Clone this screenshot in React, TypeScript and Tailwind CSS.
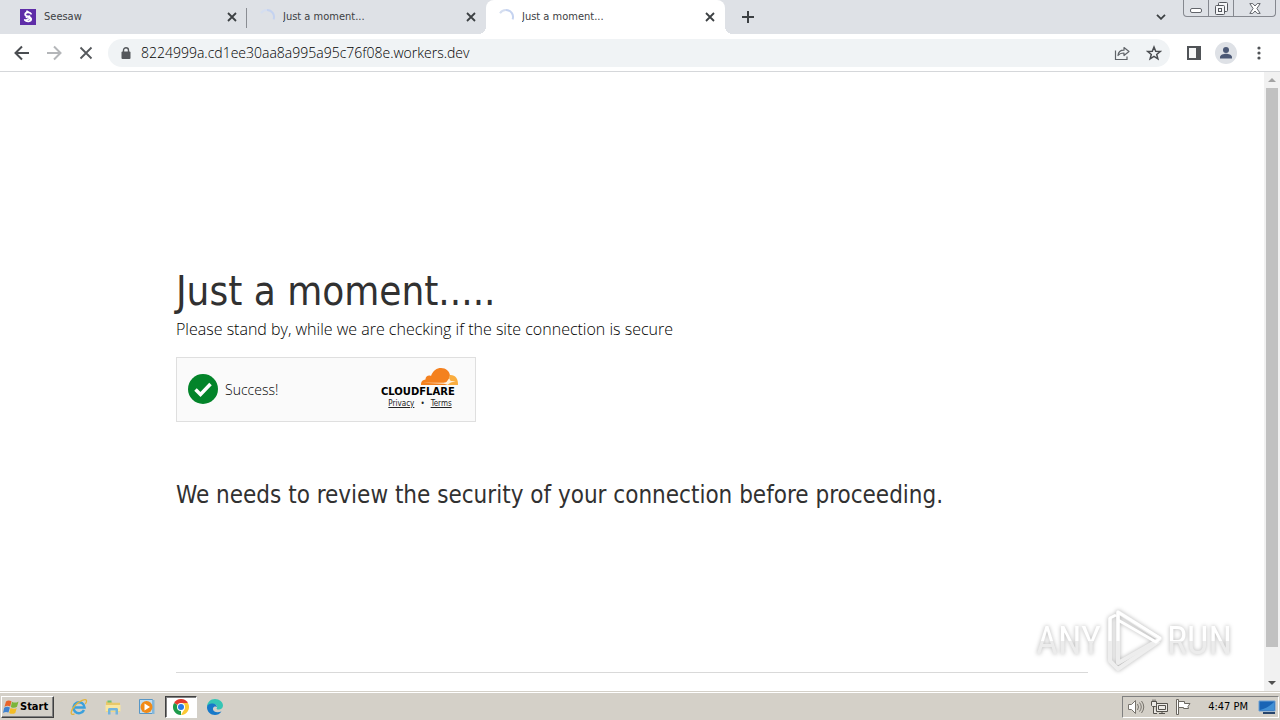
import { type ReactNode } from "react";

type TabData = {
  id: string;
  label: string;
  icon: ReactNode;
};

const Spinner = () => (
  <svg viewBox="0 0 16 16" className="size-4 shrink-0" fill="none">
    <path d="M8 1a7 7 0 0 1 6.6 9.3" stroke="#c5d3f0" strokeWidth="2" />
    <path d="M2 4.2A7 7 0 0 1 8 1" stroke="#d5def0" strokeWidth="2" />
  </svg>
);

const SeesawIcon = () => (
  <svg viewBox="0 0 16 16" className="size-4 shrink-0" fill="none">
    <path d="M0 0h16v16H0z" fill="#5f2da8" />
    <path
      d="M11 4.7C9.6 2.8 5.2 3 5.2 5.6c0 2.7 6 1.7 6 4.5 0 2.7-4.7 3-6.4.8M7 2.3l1.5 1M6.5 8.2l3-1M7 10.5l2.5-.8"
      stroke="#fff"
      strokeWidth="1.8"
      strokeLinecap="round"
    />
  </svg>
);

const tabs: TabData[] = [
  { id: "seesaw", label: "Seesaw", icon: <SeesawIcon /> },
  { id: "moment-1", label: "Just a moment...", icon: <Spinner /> },
  { id: "moment-2", label: "Just a moment...", icon: <Spinner /> },
];

const CloseIcon = () => (
  <svg viewBox="0 0 10 10" className="size-[10px]" stroke="#3c4043" strokeWidth="1.8">
    <path d="m1 1 8 8M9 1 1 9" />
  </svg>
);

interface BrowserTabProps {
  tab: TabData;
  isActive: boolean;
  divider: boolean;
}

const BrowserTab: React.FC<BrowserTabProps> = ({ tab, isActive, divider }) => (
  <div
    className={`relative flex h-[34px] w-[239px] min-w-0 items-center pl-3 pr-[10px] ${
      isActive ? "rounded-t-lg bg-white" : ""
    }`}
  >
    {isActive && (
      <>
        <span className="absolute -left-2 bottom-0 size-2 bg-[radial-gradient(circle_at_0_0,transparent_8px,white_8px)]" />
        <span className="absolute -right-2 bottom-0 size-2 bg-[radial-gradient(circle_at_100%_0,transparent_8px,white_8px)]" />
      </>
    )}
    {tab.icon}
    <span className="ml-2 flex-1 truncate pt-px text-[11px] text-[#3c4043]">{tab.label}</span>
    <button aria-label={`Close ${tab.label}`}>
      <CloseIcon />
    </button>
    {divider && <span className="absolute right-0 top-2 h-5 w-px bg-[#8a8d93]" />}
  </div>
);

const WindowButtons = () => (
  <div className="flex h-[17px] w-[93px] divide-x divide-[#85888f] rounded-b-[4px] border border-t-0 border-[#85888f]">
    <button aria-label="Minimize" className="grid w-[25px] place-items-center pt-1">
      <svg viewBox="0 0 12 5" className="h-[5px] w-3" fill="#fff" stroke="#62656b">
        <rect x=".5" y=".5" width="11" height="4" rx="1.5" />
      </svg>
    </button>
    <button aria-label="Restore" className="grid w-[25px] place-items-center">
      <svg viewBox="0 0 13 13" className="size-[13px]" fill="#f5f6f8" stroke="#55585e">
        <rect x="3.5" y=".5" width="9" height="9" rx="1" />
        <rect x=".5" y="3.5" width="9" height="9" rx="1" />
        <rect x="3.5" y="6.5" width="3" height="3" />
      </svg>
    </button>
    <button aria-label="Close window" className="grid flex-1 place-items-center">
      <svg viewBox="0 0 12 11" className="h-[11px] w-3" fill="#fff" stroke="#62656b" strokeLinejoin="round">
        <path d="M.8.6h3L6 3 8.2.6h3L7.9 5.5l3.3 4.9h-3L6 8l-2.2 2.4h-3l3.300-4.900z" />
      </svg>
    </button>
  </div>
);

const TabStrip = () => (
  <div className="flex h-[34px] shrink-0 items-start bg-[#dee1e6] pl-2">
    {tabs.map((tab, i) => (
      <BrowserTab key={tab.id} tab={tab} isActive={i === 2} divider={i === 0} />
    ))}
    <button aria-label="New tab" className="ml-[17px] grid h-[34px] w-3 place-items-center">
      <svg viewBox="0 0 12 12" className="size-3" stroke="#3c4043" strokeWidth="2">
        <path d="M6 0v12M0 6h12" />
      </svg>
    </button>
    <button aria-label="Search tabs" className="ml-auto mr-[17px] grid h-[34px] w-[10px] place-items-center">
      <svg viewBox="0 0 10 6" className="h-[6px] w-[10px]" fill="none" stroke="#3c4043" strokeWidth="1.8">
        <path d="m1 .8 4 4 4-4" />
      </svg>
    </button>
    <div className="pr-1">
      <WindowButtons />
    </div>
  </div>
);

const Toolbar = () => (
  <div className="flex h-[38px] shrink-0 items-center border-b border-[#d5d7da] bg-white pl-[14px] pr-[13px]">
    <div className="flex gap-4">
      <button aria-label="Back">
        <svg viewBox="0 0 16 16" className="size-4" fill="none" stroke="#4a4d51" strokeWidth="2">
          <path d="M15 8H2M8 1.5 1.5 8 8 14.5" />
        </svg>
      </button>
      <button aria-label="Forward">
        <svg viewBox="0 0 16 16" className="size-4" fill="none" stroke="#b4b6b9" strokeWidth="2">
          <path d="M1 8h13M8 1.5 14.5 8 8 14.5" />
        </svg>
      </button>
      <button aria-label="Stop loading">
        <svg viewBox="0 0 16 16" className="size-4" fill="none" stroke="#55585c" strokeWidth="1.8">
          <path d="m2.5 2.5 11 11M13.5 2.5l-11 11" />
        </svg>
      </button>
    </div>
    <div className="ml-[14px] flex h-7 flex-1 items-center rounded-full bg-[#f0f3f5] px-3">
      <svg viewBox="0 0 10 12" className="ml-px h-3 w-[10px]">
        <rect x=".5" y="4.5" width="9" height="7.5" rx="1" fill="#55585c" />
        <path d="M2.5 5V3.2a2.5 2.5 0 0 1 5 0V5" fill="none" stroke="#55585c" strokeWidth="1.4" />
      </svg>
      <input
        aria-label="Address"
        className="ml-[10px] min-w-0 flex-1 bg-transparent font-['Open_Sans',sans-serif] text-[14px] font-light text-black outline-none"
        defaultValue="8224999a.cd1ee30aa8a995a95c76f08e.workers.dev"
      />
      <button aria-label="Share" className="mr-4">
        <svg viewBox="0 0 16 16" className="size-4" fill="none" stroke="#5f6368" strokeWidth="1.2">
          <path d="M1.5 5.5v9H13v-3" />
          <path d="M4 10.5c.3-3.5 2.3-5.3 6-5.3V2.5L15 6.5l-5 4V8c-2.7 0-4.7.7-6 2.5z" strokeLinejoin="round" />
        </svg>
      </button>
      <button aria-label="Bookmark" className="-mr-1">
        <svg viewBox="0 0 16 16" className="size-4" fill="none" stroke="#4a4d51" strokeWidth="1.5">
          <path d="m8 2 1.7 4.2 4.5.3-3.5 2.9 1.2 4.4L8 11.4l-3.9 2.4 1.2-4.4-3.5-2.9 4.5-.3z" />
        </svg>
      </button>
    </div>
    <button aria-label="Side panel" className="ml-[17px]">
      <svg viewBox="0 0 14 14" className="size-[14px]">
        <path d="M1 1h12v12H1z" fill="#f6f7f8" stroke="#505357" strokeWidth="2" />
        <path d="M9 1h4v12H9z" fill="#505357" />
      </svg>
    </button>
    <button aria-label="Profile" className="ml-[14px]">
      <svg viewBox="0 0 22 22" className="size-[22px]">
        <circle cx="11" cy="11" r="11" fill="#dee1e6" />
        <circle cx="11" cy="8" r="3" fill="#4b5875" />
        <path d="M5 16.5v-1.3c0-2.3 3.6-3.4 6-3.4s6 1.1 6 3.4v1.3z" fill="#4b5875" />
      </svg>
    </button>
    <button aria-label="Menu" className="ml-[14px]">
      <svg viewBox="0 0 16 16" className="size-4" fill="#505357">
        <circle cx="8" cy="3" r="1.6" />
        <circle cx="8" cy="8" r="1.6" />
        <circle cx="8" cy="13" r="1.6" />
      </svg>
    </button>
  </div>
);

const Widget = () => (
  <div className="mt-4 flex h-[65px] w-[300px] items-center justify-between border border-[#dfdfdf] bg-[#fafafa] pl-[11px] pr-4">
    <div className="flex items-center gap-[7px]">
      <svg viewBox="0 0 30 30" className="size-[30px]">
        <circle cx="15" cy="15" r="15" fill="#03842a" />
        <path d="m7.5 15.5 5 5 10-10.5" fill="none" stroke="#fff" strokeWidth="3.5" />
      </svg>
      <span className="font-['Open_Sans',sans-serif] text-[14px] font-light text-black">Success!</span>
    </div>
    <div className="flex w-[78px] flex-col">
      <svg viewBox="0 0 38 18" className="ml-10 h-[18px] w-[38px]">
        <path
          d="M0 17c-.3-3 1.6-5.2 4.5-5.4C4.2 8.5 7.5 6.6 10 8 12 2.5 15.8 0 20 0c5 0 8.5 3.3 9 7.500l-2.500 9.500z"
          fill="#f4811f"
        />
        <path d="M28.5 7c5.5-.6 9 3.5 8.5 10H25.5l2.5-2.5z" fill="#faad3f" />
        <path d="M2 14.8h20.5c2-.2 3.3-.8 4-2.3l1.5-2 1.8 2.5 5 .3-5 1.2-3.3 2.3-3.5-1z" fill="#fff0dc" />
      </svg>
      <span className="font-['DejaVu_Sans'] text-[10px] font-bold leading-[12px] text-black">CLOUDFLARE</span>
      <div className="flex justify-center gap-[6px] text-[8px] leading-[12px] text-[#232323]">
        <a href="#privacy" className="underline">Privacy</a>
        <span>•</span>
        <a href="#terms" className="underline">Terms</a>
      </div>
    </div>
  </div>
);

const ScrollBar = () => (
  <div className="flex w-4 shrink-0 flex-col items-center bg-[#f1f1f1]">
    <div className="grid h-4 place-items-center">
      <svg viewBox="0 0 8 4" className="h-1 w-2" fill="#a3a3a3">
        <path d="M0 4 4 0l4 4z" />
      </svg>
    </div>
    <div className="w-3 flex-1 bg-[#c1c1c1]" />
    <div className="mt-7 grid h-4 place-items-center">
      <svg viewBox="0 0 8 4" className="h-1 w-2" fill="#505050">
        <path d="m0 0 4 4 4-4z" />
      </svg>
    </div>
  </div>
);

const Watermark = () => (
  <div className="pointer-events-none absolute bottom-[18px] right-12 flex items-center gap-1 font-['Roboto_Condensed','Roboto',sans-serif] text-[38px] leading-[64px] drop-shadow-[0_0_2px_#b5b5b5]">
    <span className="bg-linear-to-b from-white from-50% to-[#ececec] to-50% bg-clip-text text-transparent">ANY</span>
    <svg viewBox="0 0 58 64" className="h-16 w-[58px]" fill="none" strokeLinejoin="round">
      <path d="M5 9v43l8 8 41-28" stroke="#eee" strokeWidth="4" />
      <path d="M13 3v51l42-24z" stroke="#ededed" strokeWidth="4" />
      <path d="M5 32V9l6-3M13 32V3l42 26-4 4-38-22" stroke="#fff" strokeWidth="3" />
    </svg>
    <span className="bg-linear-to-b from-white from-50% to-[#ececec] to-50% bg-clip-text text-transparent">RUN</span>
  </div>
);

const Page = () => (
  <div className="relative flex min-h-0 flex-1 bg-white">
    <div className="flex flex-1 flex-col">
      <main className="mx-auto flex w-full max-w-[960px] flex-1 flex-col justify-center px-6 pt-8 text-[#313131]">
        <h1 className="text-[40px] leading-[52px]">Just a moment.....</h1>
        <p className="font-['Open_Sans',sans-serif] text-[16px] font-light leading-6 text-black">
          Please stand by, while we are checking if the site connection is secure
        </p>
        <Widget />
        <h2 className="mt-14 text-[24px] leading-[34px]">
          We needs to review the security of your connection before proceeding.
        </h2>
      </main>
      <footer className="mx-auto w-full max-w-[960px] px-6">
        <div className="h-[19px] border-t border-[#d9d9d9]" />
      </footer>
    </div>
    <ScrollBar />
    <Watermark />
  </div>
);

const StartFlag = () => (
  <svg viewBox="0 0 16 16" className="size-4">
    <path d="M3 2.500c2-1.700 3.700-1.200 5.500-.2L7.200 7.500C5.500 6.500 3.700 6.300 1.500 7.700z" fill="#e8642a" />
    <path d="M9 2.700c2.200 1.200 4.200 1.200 6.500-.3L14 7.800c-2 1.300-4.200 1.300-6.200.1z" fill="#7bb53b" />
    <path d="M1.200 8.700c2.200-1.300 3.900-1.100 5.700-.1l-1.400 5c-1.800-.9-3.600-.8-5.500.4z" fill="#3f82cf" />
    <path d="M7.500 9c2.200 1.100 4.200 1.100 6.200-.1l-1.400 5c-2.100 1.200-4.200 1.100-6.200 0z" fill="#f3bd27" />
  </svg>
);

const InternetExplorerIcon = () => (
  <svg viewBox="0 0 18 18" className="size-[18px]" fill="none">
    <path d="M14 12A5.5 5.5 0 1 1 14.5 9.5H5" stroke="#3ba0dc" strokeWidth="2.5" />
    <path d="M4.5 15.8c-5 2.5-4-3.5.5-8.3S15.8.3 16.5 2.5c.3 1-.3 2.3-1.2 3.5" stroke="#e2b43c" strokeWidth="1.3" />
  </svg>
);

const ExplorerIcon = () => (
  <svg viewBox="0 0 18 18" className="size-[18px]">
    <path d="M2 3.5h5l1.5 1.3H16V14H2z" fill="#e8c869" />
    <path d="M3.5 2.5h4v2h-4z" fill="#6fbf73" />
    <path d="M1.5 7h15v6.5h-15z" fill="#f8e6a0" />
    <path d="M4 16.500V11.500c0-1 .7-1.500 1.500-1.500h7c.8 0 1.500.5 1.500 1.500v5h-2.500v-4h-5v4z" fill="#72b4dd" />
  </svg>
);

const MediaPlayerIcon = () => (
  <svg viewBox="0 0 18 18" className="size-[18px]">
    <path d="M1.5 1.5h13v14h-13z" fill="#bfdcf0" stroke="#5897c6" />
    <path d="M14 2h2.5v14H14z" fill="#82b6da" />
    <circle cx="8.5" cy="9" r="6" fill="#f18a17" />
    <path d="m6.5 5.5 5.5 3.5-5.5 3.5z" fill="#fff" />
  </svg>
);

const ChromeIcon = () => (
  <svg viewBox="0 0 16 16" className="size-4">
    <path d="M8 8 1.07 4A8 8 0 0 1 14.93 4z" fill="#e33b2e" />
    <path d="M8 8v8A8 8 0 0 1 1.07 4z" fill="#1e9b4b" />
    <path d="M8 4h6.93A8 8 0 0 1 8 16l3.46-6z" fill="#fcc934" />
    <circle cx="8" cy="8" r="4" fill="#fff" />
    <circle cx="8" cy="8" r="3" fill="#287ae6" />
  </svg>
);

const EdgeIcon = () => (
  <svg viewBox="0 0 16 16" className="size-4">
    <path d="M0 8C0 3.5 3.5 0 8 0s8 3 8 6.5C16 9 14 10.5 11.8 10.5c-2 0-2.5-.8-2.1-1.3C11 7.5 9.5 5 6.5 5 3.5 5 .5 6 0 8z" fill="#35c5b5" />
    <path d="M0 8.5C-.2 5.5 3 4 6 4.5c2.5.4 4 2 4 3.5-1-1-3-.8-3.8.7C5 11.5 8 14.5 14.5 12.5 12.8 15 10.5 16 8 16c-4.5 0-8-3.5-8-7.5z" fill="#1779c9" />
  </svg>
);

const pinned = [
  { name: "Internet Explorer", icon: <InternetExplorerIcon /> },
  { name: "Windows Explorer", icon: <ExplorerIcon /> },
  { name: "Media Player", icon: <MediaPlayerIcon /> },
  { name: "Google Chrome", icon: <ChromeIcon />, isActive: true },
  { name: "Microsoft Edge", icon: <EdgeIcon /> },
];

const Tray = () => (
  <div className="ml-auto flex h-[22px] items-center border border-[#808080] border-b-white border-r-white pl-1 pr-[2px] text-black">
    <svg viewBox="0 0 18 16" className="h-4 w-[18px]" fill="#fff" stroke="#77736c">
      <path d="M1.5 5.5h3l4-4v13l-4-4h-3z" />
      <path d="M10.5 5q2 3 0 6M12.5 3.5q3.5 4.5 0 9M14.5 2q4.5 6 0 12" fill="none" />
    </svg>
    <svg viewBox="0 0 18 16" className="ml-[6px] h-4 w-[18px]" fill="#eceae6" stroke="#55524d">
      <path d="M5.5 4.5h11v8h-11zM7.5 6.5h7v4h-7zM8 14.5h6M11 12v2.5M2.5 8v6.5H6" />
      <path d="M.5 2.5h5v4l-1 1h-3l-1-1zM2 .5v2M4 .5v2" />
    </svg>
    <svg viewBox="0 0 18 16" className="ml-[6px] h-4 w-[18px]" fill="#fff" stroke="#6b6760">
      <path d="M1.5.5h2v15h-2z" />
      <path d="M3.5 2.5h6v2H15l-2 3 .5 2h-5v-1h-5z" />
    </svg>
    <time className="ml-[15px] text-[11px]">4:47 PM</time>
    <button aria-label="Show desktop" className="ml-[10px]">
      <svg viewBox="0 0 18 16" className="h-4 w-[18px]">
        <path d="M1 2h16v10H1z" fill="#1964b5" stroke="#6a9fd4" />
        <path d="M2 11c5-1 10-4 14-8v8z" fill="#4190d5" />
        <path d="M5 14h12" stroke="#26446b" strokeWidth="2" />
      </svg>
    </button>
  </div>
);

const Taskbar = () => (
  <div className="flex h-7 shrink-0 items-center border-t border-white bg-[#d4d0c8] px-px pt-px">
    <button className="flex h-[22px] w-[53px] items-center gap-px border border-b-[#404040] border-l-white border-r-[#404040] border-t-white pl-px text-[11px] font-bold text-black shadow-[inset_-1px_-1px_#808080]">
      <StartFlag />
      Start
    </button>
    <nav className="ml-[9px] flex gap-[2px]">
      {pinned.map((item) => (
        <button
          key={item.name}
          aria-label={item.name}
          className={`grid h-[22px] w-8 place-items-center ${
            item.isActive
              ? "border border-[#404040] border-b-white border-r-white bg-white shadow-[inset_1px_1px_#808080]"
              : ""
          }`}
        >
          {item.icon}
        </button>
      ))}
    </nav>
    <Tray />
  </div>
);

const App = () => {
  return (
    <div className="flex h-screen flex-col overflow-hidden bg-white font-['DejaVu_Sans_Condensed','Noto_Sans',sans-serif]">
      <TabStrip />
      <Toolbar />
      <Page />
      <div className="h-px shrink-0 bg-[#d4d0c8]" />
      <Taskbar />
    </div>
  );
};

export default App;
